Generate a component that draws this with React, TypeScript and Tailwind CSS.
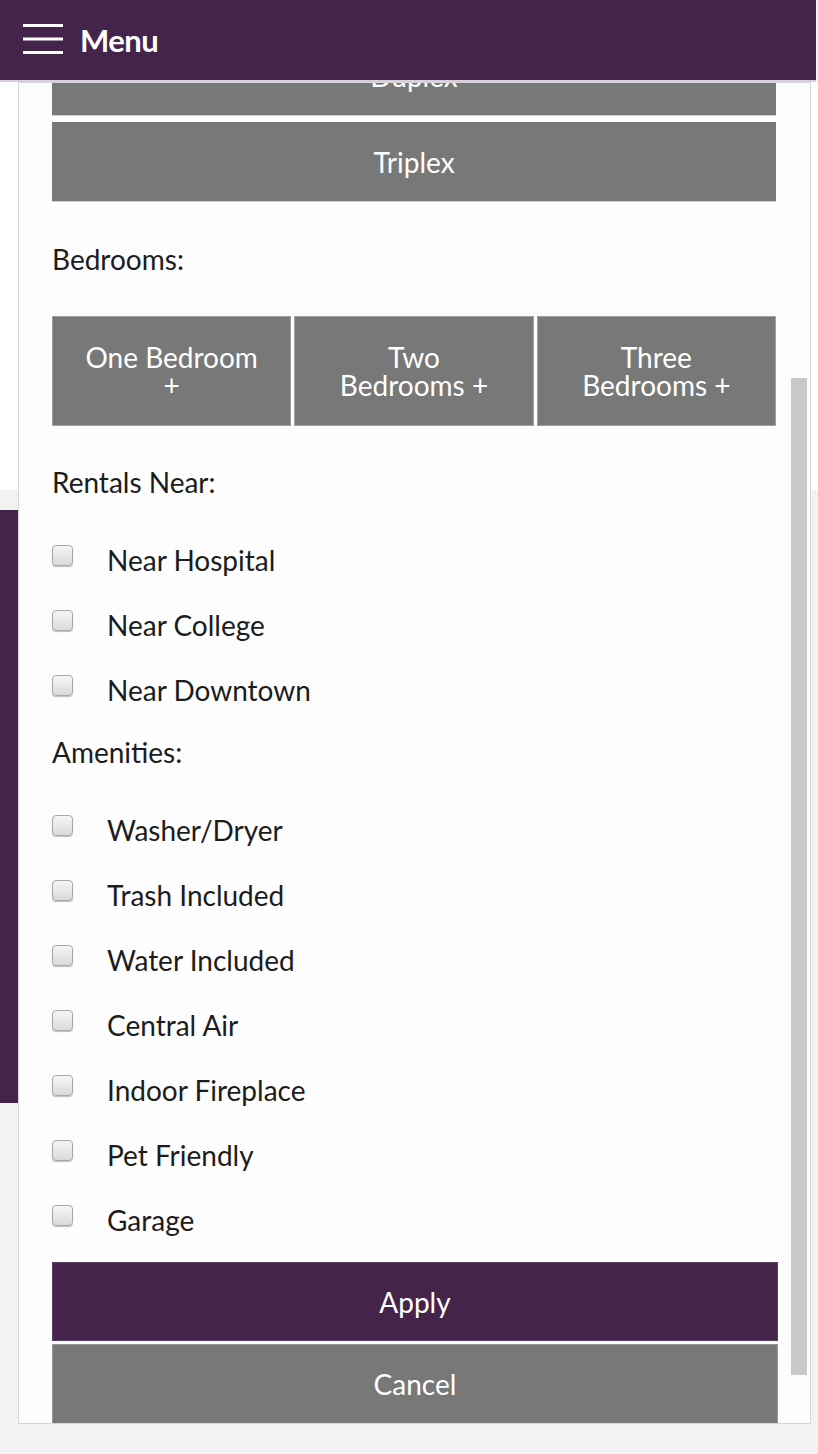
import React from "react";

const nearItems = ["Near Hospital", "Near College", "Near Downtown"];
const amenities = ["Washer/Dryer", "Trash Included", "Water Included", "Central Air", "Indoor Fireplace", "Pet Friendly", "Garage"];
const bedrooms = [["One Bedroom", "+"], ["Two", "Bedrooms +"], ["Three", "Bedrooms +"]];

function Check({ label }: { label: string }) {
  return (
    <label className="flex h-[28px] items-start">
      <span className="mt-[-1px] h-[21px] w-[21px] shrink-0 rounded-[4px] border border-[#a8a8a8] bg-linear-to-b from-[#f6f6f6] to-[#dadada] shadow-[0_1px_1px_rgba(0,0,0,0.25)]" />
      <span className="ml-[34px] text-[28px] leading-[28px] text-[#1c1c1c]">{label}</span>
    </label>
  );
}

export default function App() {
  return (
    <div className="relative h-[1454px] w-full overflow-hidden bg-[#f2f2f2] font-['Lato',sans-serif]">
      <header className="flex h-[82px] w-[816px] items-center border-b-2 border-[#d9cedb] bg-[#45244b] pl-[23px]">
        <svg width="41" height="34" viewBox="0 0 41 34" className="mb-[2px]">
          <rect x="0" y="2" width="40" height="3" fill="#fff" />
          <rect x="0" y="15.5" width="40" height="3" fill="#fff" />
          <rect x="0" y="29" width="40" height="3" fill="#fff" />
        </svg>
        <span className="ml-[16px] text-[31px] font-bold leading-none tracking-[-0.5px] text-white">Menu</span>
      </header>
      <div className="h-[408px] bg-white" />
      <div className="mt-[20px] h-[593px] w-[18px] bg-[#45244b]" />

      <div className="absolute left-[18px] top-[82px] h-[1342px] w-[793px] overflow-hidden border border-[#d6d6d6] bg-[#fdfdfd]">
        <div className="mt-[-47px] pl-[33px]">
          <div className="flex flex-col gap-[6px]">
            {["Duplex", "Triplex"].map((t) => (
              <button key={t} className="flex h-[80px] w-[724px] items-center justify-center border-b border-[#cfcfcf] bg-[#787878] text-[28px] text-white">
                {t}
              </button>
            ))}
          </div>

          <p className="mt-[43px] text-[28px] leading-[28px] text-[#1c1c1c]">Bedrooms:</p>
          <div className="mt-[43px] flex w-[724px] gap-[3px]">
            {bedrooms.map(([a, b]) => (
              <button key={a} className="flex h-[110px] flex-1 flex-col items-center justify-center border border-[#a0a0a0] bg-[#787878] text-[28px] leading-[28px] text-white">
                <span>{a}</span>
                <span>{b}</span>
              </button>
            ))}
          </div>

          <p className="mt-[42px] text-[28px] leading-[28px] text-[#1c1c1c]">Rentals Near:</p>
          <div className="mt-[50px] flex flex-col gap-[37px]">
            {nearItems.map((n) => <Check key={n} label={n} />)}
          </div>

          <p className="mt-[34px] text-[28px] leading-[28px] text-[#1c1c1c]">Amenities:</p>
          <div className="mt-[50px] flex flex-col gap-[37px]">
            {amenities.map((n) => <Check key={n} label={n} />)}
          </div>

          <div className="mt-[28px] flex w-[726px] flex-col gap-[3px]">
            <button className="flex h-[79px] items-center justify-center border border-[#5d3e63] bg-[#45244b] text-[28px] text-white">Apply</button>
            <button className="flex h-[80px] items-center justify-center border border-[#9a9a9a] bg-[#787878] text-[28px] text-white">Cancel</button>
          </div>
        </div>
        <div className="absolute right-[3px] top-[295px] h-[997px] w-[16px] bg-[#c9c9c9]" />
      </div>
    </div>
  );
}
